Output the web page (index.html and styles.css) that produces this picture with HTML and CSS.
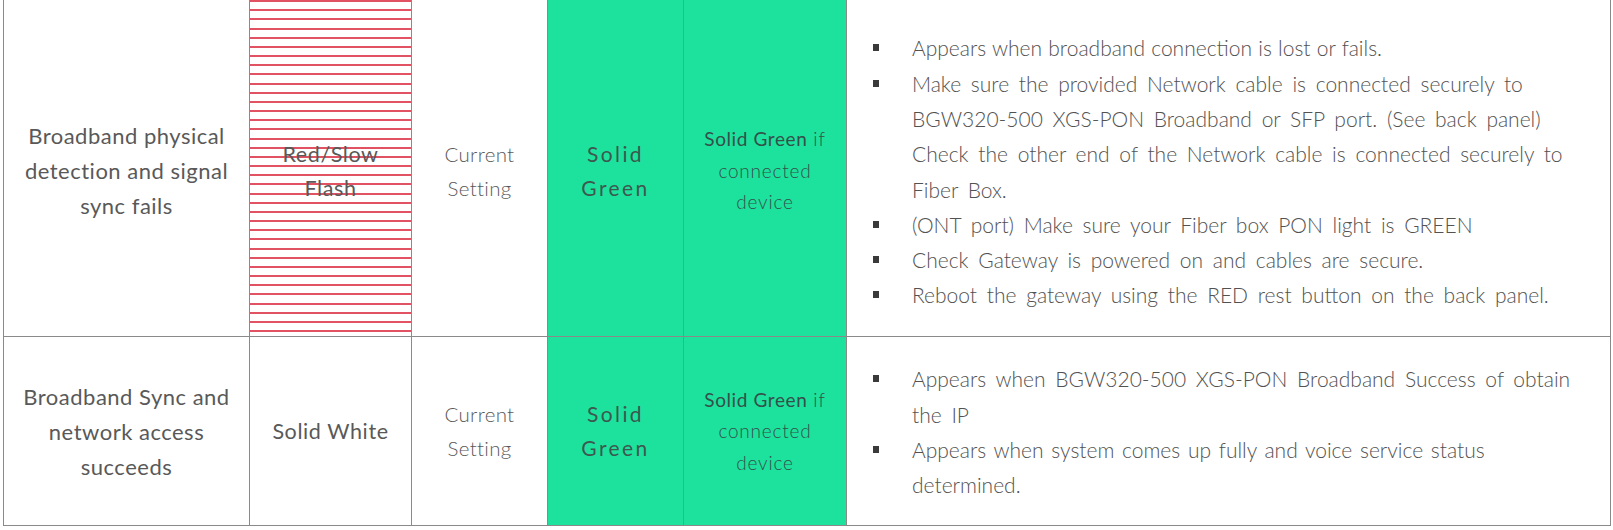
FILE: index.html
```html
<!DOCTYPE html>
<html lang="en">
<head>
<meta charset="utf-8">
<title>LED status</title>
<link rel="stylesheet" href="styles.css">
</head>
<body>
<div class="page">
  <table class="led-table">
    <colgroup>
      <col class="w-cond">
      <col class="w-led">
      <col class="w-cur">
      <col class="w-solid">
      <col class="w-port">
      <col class="w-desc">
    </colgroup>
    <tr class="row-fail">
      <td class="cond">Broadband physical<br>detection and signal<br>sync fails</td>
      <td class="led stripes">Red/Slow<br>Flash</td>
      <td class="cur">Current<br>Setting</td>
      <td class="green solid">Solid<br>Green</td>
      <td class="green port"><span class="reg">Solid Green</span> if<br>connected<br>device</td>
      <td class="desc">
        <ul>
          <li class="tight">Appears when broadband connection is lost or fails.</li>
          <li>Make sure the provided Network cable is connected securely to<br>BGW320-500 XGS-PON Broadband or SFP port. (See back panel)<br>Check the other end of the Network cable is connected securely to<br>Fiber Box.</li>
          <li>(ONT port) Make sure your Fiber box PON light is GREEN</li>
          <li>Check Gateway is powered on and cables are secure.</li>
          <li>Reboot the gateway using the RED rest button on the back panel.</li>
        </ul>
      </td>
    </tr>
    <tr class="row-ok">
      <td class="cond">Broadband Sync and<br>network access<br>succeeds</td>
      <td class="led">Solid White</td>
      <td class="cur">Current<br>Setting</td>
      <td class="green solid">Solid<br>Green</td>
      <td class="green port"><span class="reg">Solid Green</span> if<br>connected<br>device</td>
      <td class="desc">
        <ul>
          <li>Appears when BGW320-500 XGS-PON Broadband Success of obtain<br>the IP</li>
          <li class="mid">Appears when system comes up fully and voice service status<br>determined.</li>
        </ul>
      </td>
    </tr>
  </table>
</div>
</body>
</html>
```
FILE: styles.css
```css
html, body {
  margin: 0;
  padding: 0;
  background: #ffffff;
}

.page {
  padding-left: 3px;
  width: 1610px;
}

.led-table {
  border-collapse: collapse;
  table-layout: fixed;
  width: 1607px;
  font-family: Lato, "Open Sans", sans-serif;
  color: #595959;
}

.w-cond { width: 246px; }
.w-led { width: 162px; }
.w-cur { width: 136px; }
.w-solid { width: 136px; }
.w-port { width: 163px; }
.w-desc { width: 764px; }

.led-table td {
  border: 1px solid #8a8a8a;
  text-align: center;
  vertical-align: middle;
  padding: 0;
}

.row-fail td {
  border-top: none;
  height: 331px;
  padding-top: 5px;
}

.row-ok td {
  height: 188px;
}

.cond {
  font-size: 22px;
  line-height: 35px;
  letter-spacing: 0.5px;
  font-weight: 400;
}

.led {
  font-size: 21.5px;
  line-height: 34px;
  letter-spacing: 0.6px;
  font-weight: 400;
}

.stripes {
  background-image: repeating-linear-gradient(
    to bottom,
    rgba(221, 58, 78, 0.88) 0px,
    rgba(221, 58, 78, 0.88) 2px,
    #ffffff 2px,
    #ffffff 9.17px
  );
}

.cur {
  font-size: 20.5px;
  line-height: 34px;
  font-weight: 300;
  letter-spacing: 0.3px;
}

.green {
  background: #1de29d;
  color: #3d584f;
}

.solid {
  font-size: 21px;
  line-height: 34px;
  letter-spacing: 2.4px;
  font-weight: 400;
}

.port {
  font-size: 19px;
  line-height: 31.5px;
  font-weight: 300;
  letter-spacing: 0.8px;
  color: #34504a;
}

.port .reg {
  font-weight: 400;
  letter-spacing: 0.6px;
}

.desc {
  text-align: left !important;
}

.desc ul {
  list-style: none;
  margin: 0;
  padding: 2px 0 0 65px;
}

.desc li {
  position: relative;
  font-size: 21px;
  line-height: 35.3px;
  font-weight: 300;
  word-spacing: 4px;
  color: #525252;
}

.desc li.tight {
  word-spacing: 0.5px;
}

.desc li.mid {
  word-spacing: 2px;
}

.desc li::before {
  content: "";
  position: absolute;
  left: -39px;
  top: 14px;
  width: 6px;
  height: 7px;
  background: #3a3a3a;
}
```
